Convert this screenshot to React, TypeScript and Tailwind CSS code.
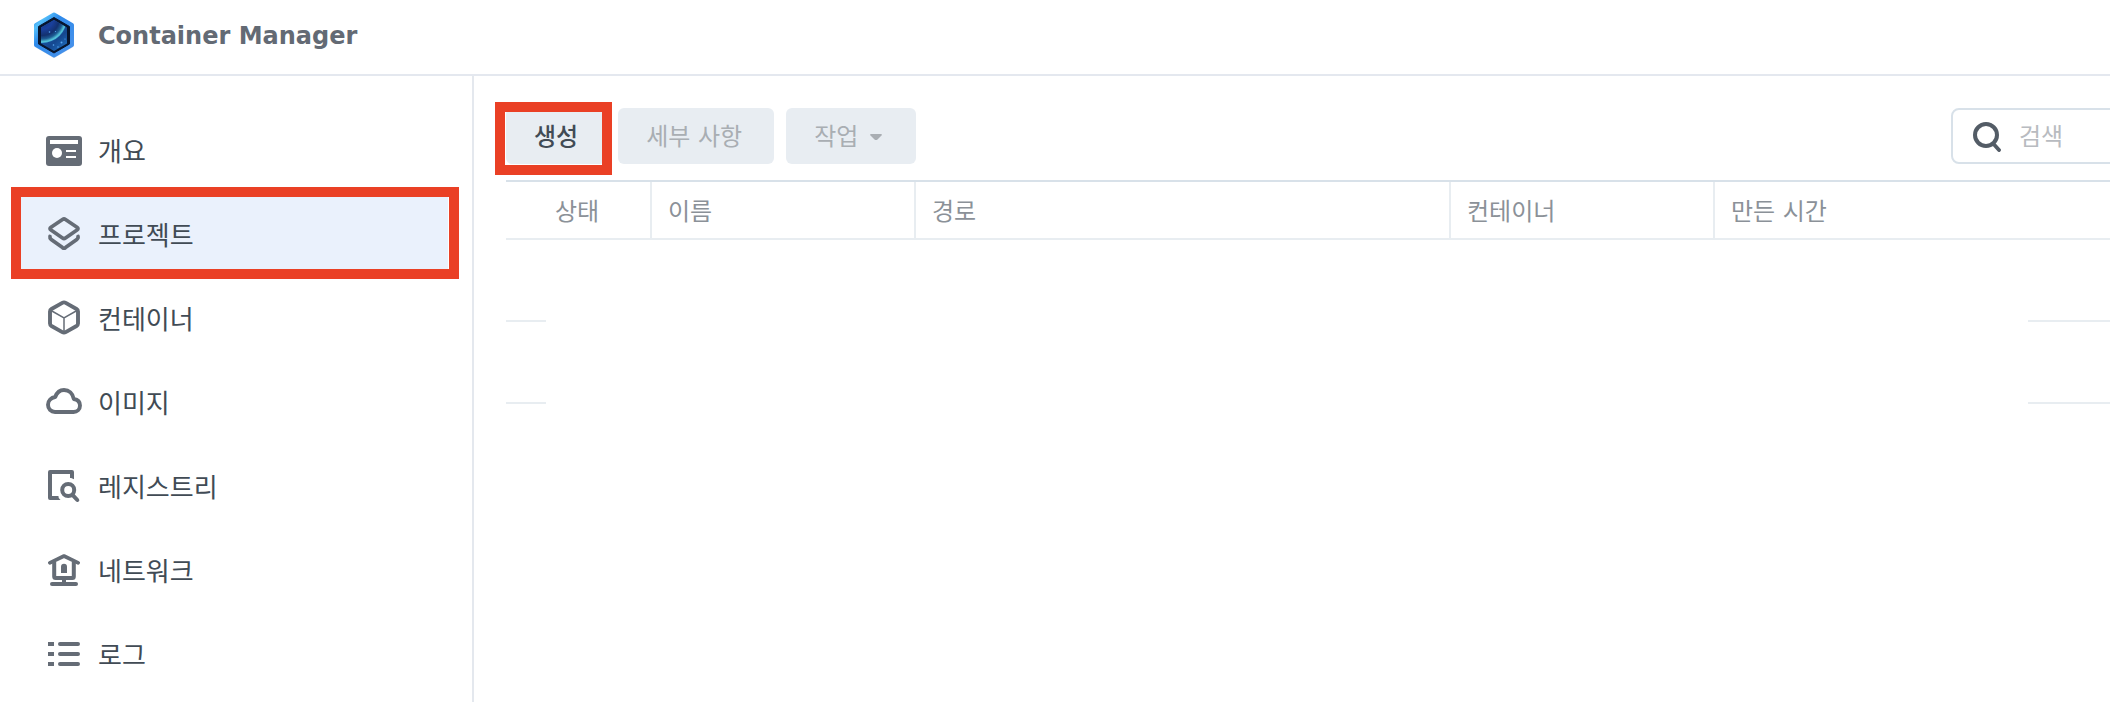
import type { ReactNode } from "react";

function Icon({ children }: { children: ReactNode }) {
  return (
    <svg viewBox="0 0 36 36" className="size-9 shrink-0 text-[#656c76]" fill="none" stroke="currentColor" aria-hidden="true">
      {children}
    </svg>
  );
}

function Logo() {
  return (
    <svg viewBox="0 0 44 48" className="h-12 w-11 shrink-0" aria-hidden="true">
      <defs>
        <linearGradient id="rim" x1="0" y1="0" x2="1" y2="1">
          <stop offset="0" stopColor="#2f86e4" />
          <stop offset="0.15" stopColor="#55c0fa" />
          <stop offset="0.35" stopColor="#2f8aea" />
          <stop offset="1" stopColor="#4a92ea" />
        </linearGradient>
        <linearGradient id="sky" x1="0.2" y1="0.4" x2="0.7" y2="1">
          <stop offset="0" stopColor="#1d62b4" />
          <stop offset="0.5" stopColor="#15478f" />
          <stop offset="1" stopColor="#2480d4" />
        </linearGradient>
        <radialGradient id="planet" gradientUnits="userSpaceOnUse" cx="10" cy="7" r="25">
          <stop offset="0" stopColor="#12337c" />
          <stop offset="0.45" stopColor="#1a409c" />
          <stop offset="0.7" stopColor="#13316f" />
          <stop offset="0.84" stopColor="#1d5c94" />
          <stop offset="0.95" stopColor="#55c4d8" />
          <stop offset="1" stopColor="#3fa9d4" />
        </radialGradient>
        <clipPath id="glass">
          <path d="M22 9 35 16.500V32.500L22 40 9 32.500V16.500Z" />
        </clipPath>
      </defs>
      <path d="M22 4 40 14.500V35L22 45.500 4 35V14.500Z" fill="#c9d3e2" stroke="#c9d3e2" strokeWidth="3" strokeLinejoin="round" opacity="0.6" />
      <path d="M22 3.500 40 14V34L22 44.500 4 34V14Z" fill="url(#rim)" stroke="url(#rim)" strokeWidth="4" strokeLinejoin="round" />
      <path d="M22 6.500 37.500 15.500V33L22 42 6.500 33V15.500Z" fill="#07152e" stroke="#07152e" strokeLinejoin="round" />
      <g clipPath="url(#glass)">
        <path d="M0 0H44V48H0Z" fill="url(#sky)" />
        <circle cx="10" cy="7" r="25" fill="url(#planet)" />
      </g>
      <g fill="#5aa9f4">
        <circle cx="17.500" cy="21" r="0.800" />
        <circle cx="23.500" cy="20.500" r="0.600" />
        <circle cx="21.500" cy="34" r="0.800" />
        <circle cx="29.500" cy="31.500" r="1" />
        <circle cx="26" cy="36" r="0.700" />
        <circle cx="33" cy="28" r="0.600" />
      </g>
    </svg>
  );
}

const overviewIcon = (
  <Icon>
    <rect x="0" y="4" width="36" height="30" rx="3" fill="currentColor" stroke="none" />
    <g fill="#fff" stroke="none">
      <rect x="4" y="8" width="28" height="4" />
      <circle cx="11" cy="21" r="5" />
      <rect x="20" y="18" width="10" height="2" />
      <rect x="20" y="24" width="10" height="2" />
    </g>
  </Icon>
);

const projectIcon = (
  <Icon>
    <g strokeWidth="3.700" strokeLinecap="round" strokeLinejoin="round">
      <path d="M16.500 3.500Q18 2.500 19.500 3.500L31 11.300Q33 12.700 31 14.100L19.500 22Q18 23 16.500 22L5 14.100Q3 12.700 5 11.300Z" />
      <path d="M4 20.500Q3.600 22.300 5.200 23.500L16.500 31.600Q18 32.600 19.500 31.600L30.800 23.500Q32.400 22.300 32 20.500" />
    </g>
  </Icon>
);

const containerIcon = (
  <Icon>
    <path d="M16.300 2.900Q18 1.900 19.700 2.900L30.500 9Q32 9.900 32 11.500V23.500Q32 25.100 30.500 26L19.700 32.100Q18 33.100 16.300 32.100L5.500 26Q4 25.100 4 23.500V11.500Q4 9.900 5.500 9Z" strokeWidth="3.900" />
    <path d="M5 10.500 18 17.800 31 10.500M18 17.800V32" strokeWidth="1.500" />
  </Icon>
);

const imageIcon = (
  <Icon>
    <path
      d="M9 28C5 28 2 24.900 2 20.800C2 16.800 5.200 13.600 9.200 13C10.800 8.600 14 6 18 6C23 6 26.800 9.500 27.800 15C31.600 15.700 34 18.300 34 21.500C34 25.200 31.200 28 27.500 28Z"
      strokeWidth="3.900"
      strokeLinejoin="round"
    />
  </Icon>
);

const registryIcon = (
  <Icon>
    <path d="M26 10V4H4V30H12.500" strokeWidth="4" strokeLinejoin="round" />
    <path d="M24 9H28V11.200L24 9.500ZM11 28L14.500 32H11Z" fill="currentColor" stroke="none" />
    <circle cx="22.200" cy="22" r="6" strokeWidth="4" />
    <path d="M26.500 26.800 31.300 32" strokeWidth="4" strokeLinecap="round" />
  </Icon>
);

const networkIcon = (
  <Icon>
    <path d="M3.800 10.800 18 4 32.200 10.800" strokeWidth="3.700" strokeLinecap="round" strokeLinejoin="round" />
    <path d="M8.200 10V24.500Q8.200 26 9.700 26H26.300Q27.800 26 27.800 24.500V10" strokeWidth="4" />
    <path d="M15 21V14.800A3 3 0 0 1 21 14.800V21ZM16 27H20V31H16Z" fill="currentColor" stroke="none" />
    <path d="M6 32H30" strokeWidth="4" strokeLinecap="round" />
  </Icon>
);

const logIcon = (
  <Icon>
    <path d="M2 8H8M2 18H8M2 28H8" strokeWidth="4" />
    <path d="M14 8H32M14 18H32M14 28H32" strokeWidth="4" strokeLinecap="round" />
  </Icon>
);

const navItems = [
  { label: "개요", icon: overviewIcon },
  { label: "프로젝트", icon: projectIcon, active: true },
  { label: "컨테이너", icon: containerIcon },
  { label: "이미지", icon: imageIcon },
  { label: "레지스트리", icon: registryIcon },
  { label: "네트워크", icon: networkIcon },
  { label: "로그", icon: logIcon },
];

const columns = [
  { label: "상태", style: "w-[146px] border-r-2 pl-[49px]" },
  { label: "이름", style: "w-[264px] border-r-2 pl-4" },
  { label: "경로", style: "w-[535px] border-r-2 pl-4" },
  { label: "컨테이너", style: "w-[264px] border-r-2 pl-4" },
  { label: "만든 시간", style: "pl-4" },
];

export default function App() {
  return (
    <div className="flex min-h-screen flex-col overflow-hidden bg-white font-['DejaVu_Sans','Noto_Sans_CJK_KR',sans-serif]">
      <header className="flex h-[76px] items-center gap-[22px] border-b-2 border-[#e4e8ef] pb-1 pl-8">
        <Logo />
        <h1 className="pt-0.5 text-2xl font-bold text-[#636a74]">Container Manager</h1>
      </header>

      <div className="flex flex-1">
        <nav className="w-[474px] shrink-0 border-r-2 border-[#e4e8ee] pt-8 pr-6 pl-5">
          {navItems.map((item) => (
            <a
              key={item.label}
              href="#"
              aria-current={item.active ? "page" : undefined}
              className={
                item.active
                  ? "relative flex h-[84px] items-center gap-4 bg-[#eaf1fc] pl-[26px]"
                  : "flex h-[84px] items-center gap-4 pl-[26px]"
              }
            >
              {item.icon}
              <span className="pt-[3px] text-[26px] leading-9 text-[#414b55]">{item.label}</span>
              {item.active && (
                <span className="absolute -top-[5px] -right-[11px] -bottom-[3px] -left-[9px] border-10 border-[#ea4025]" />
              )}
            </a>
          ))}
        </nav>

        <main className="min-w-0 flex-1 pt-8 pl-8">
          <div className="flex items-center gap-3 text-2xl">
            <button type="button" className="relative h-14 rounded-md bg-[#e8edf2] px-7 pt-0.5 font-medium text-[#414b55]">
              생성
              <span className="absolute -top-[6px] -right-[6px] -bottom-[11px] -left-[11px] border-10 border-[#ea4025]" />
            </button>
            <button type="button" disabled className="h-14 rounded-md bg-[#e8edf2] pt-0.5 pr-8 pl-7 text-[#a9aeb3]">
              세부 사항
            </button>
            <button type="button" disabled className="flex h-14 items-center gap-3 rounded-md bg-[#e8edf2] pt-0.5 pr-[34px] pl-7 text-[#a9aeb3]">
              작업
              <svg viewBox="0 0 12 6" className="h-[6px] w-3" fill="currentColor" aria-hidden="true">
                <path d="M1 0H11Q12.500 0.500 11.500 1.500L7.500 5.400Q6 6.600 4.500 5.400L0.500 1.500Q-0.500 0.500 1 0Z" />
              </svg>
            </button>
            <label className="-mr-2 ml-auto flex h-14 w-[167px] items-center rounded-lg border-2 border-[#d8e1e9] pt-0.5 pl-5">
              <svg viewBox="0 0 28 30" className="h-[30px] w-7 shrink-0 text-[#535c66]" fill="none" stroke="currentColor" aria-hidden="true">
                <circle cx="13" cy="13" r="11" strokeWidth="4" />
                <path d="M21.500 23 26 28" strokeWidth="3.800" strokeLinecap="round" />
              </svg>
              <input
                type="text"
                aria-label="검색"
                placeholder="검색"
                className="ml-[18px] w-full min-w-0 bg-transparent text-[#414b55] outline-none placeholder:text-[#b8bbc0]"
              />
            </label>
          </div>

          <table className="mt-4 w-full table-fixed border-separate border-spacing-0 border-t-2 border-[#d8e1e9]">
            <thead>
              <tr>
                {columns.map((column) => (
                  <th
                    key={column.label}
                    scope="col"
                    className={`h-[58px] border-b-2 border-[#e8edf1] pt-[3px] text-left text-2xl font-normal text-[#8b9198] ${column.style}`}
                  >
                    {column.label}
                  </th>
                ))}
              </tr>
            </thead>
            <tbody>
              {[0, 1].map((row) => (
                <tr key={row}>
                  <td colSpan={5} className="h-[82px] p-0 align-bottom">
                    <div className="flex justify-between">
                      <div className="h-[2px] w-10 bg-[#e8edf1]" />
                      <div className="h-[2px] w-[82px] bg-[#e8edf1]" />
                    </div>
                  </td>
                </tr>
              ))}
            </tbody>
          </table>
        </main>
      </div>
    </div>
  );
}
